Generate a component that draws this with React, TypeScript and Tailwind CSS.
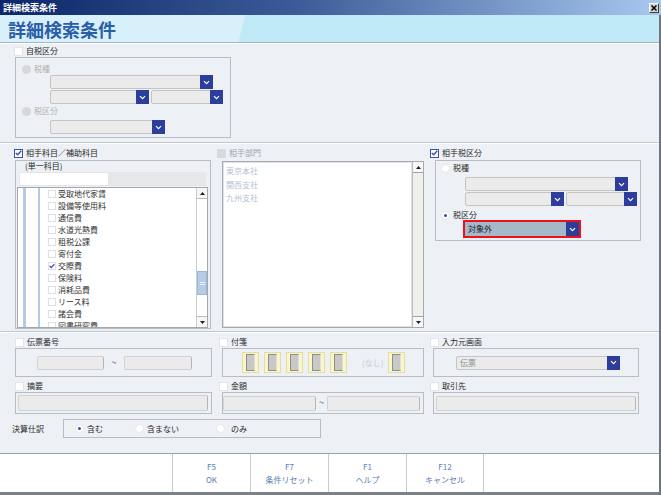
import React from 'react';

type RadioState = 'dis' | 'off' | 'on';

function Chevron() {
  return (
    <svg width="7" height="5" viewBox="0 0 7 5" fill="none">
      <path d="M1 1.2 3.5 3.7 6 1.2" stroke="#ffffff" strokeWidth="1.2" />
    </svg>
  );
}

function Arrow({ up }: { up?: boolean }) {
  return (
    <svg width="5" height="3" viewBox="0 0 5 3">
      <path d={up ? 'M0 3h5L2.5 0z' : 'M0 0h5L2.5 3z'} fill="#1e1e1e" />
    </svg>
  );
}

function Select({ w, text, textClass = '' }: { w: string; text?: string; textClass?: string }) {
  return (
    <div className={`${w} h-[14px] flex border border-[#c4c4c4] rounded-[2px] bg-[#ebebeb]`}>
      <div className={`flex-1 flex items-center pl-[3px] text-[8px] leading-[12px] ${textClass}`}>{text}</div>
      <div className="w-[13px] -my-[1px] -mr-[1px] shrink-0 bg-[#2c3d9b] flex items-center justify-center">
        <Chevron />
      </div>
    </div>
  );
}

function Input({ w, h = 'h-[14px]' }: { w: string; h?: string }) {
  return <div className={`${w} ${h} bg-[#ebebeb] border border-[#d2d2d2] border-r-[#b5b5b5] rounded-[2px]`} />;
}

function Check({ label, checked = false, disabled = false, className = '' }: { label: string; checked?: boolean; disabled?: boolean; className?: string }) {
  return (
    <div className={`flex items-center h-[10px] ${className}`}>
      <span
        className={`w-[9px] h-[9px] shrink-0 flex items-center justify-center ${
          checked ? 'bg-white border border-[#3b55a6]' : disabled ? 'bg-[#d6d9dd]' : 'bg-white border border-[#e1e4e8]'
        }`}
      >
        {checked && (
          <svg width="7" height="6" viewBox="0 0 7 6">
            <path d="M0.8 3 2.7 4.8 6.2 0.8" stroke="#2f4fa8" strokeWidth="1.4" fill="none" />
          </svg>
        )}
      </span>
      <span className={`ml-[3px] text-[8px] leading-[10px] whitespace-nowrap ${disabled ? 'text-[#9aa6b2]' : 'text-[#2a2a2a]'}`}>{label}</span>
    </div>
  );
}

function Radio({ label, state, gap = 'ml-[3px]' }: { label: string; state: RadioState; gap?: string }) {
  return (
    <div className="flex items-center h-[10px]">
      <span
        className={`w-[9px] h-[9px] rounded-full shrink-0 flex items-center justify-center ${
          state === 'dis' ? 'bg-[#d6d8db]' : 'bg-white border border-[#e6e8eb]'
        }`}
      >
        {state === 'on' && <span className="w-[3px] h-[3px] rounded-full bg-[#2f4fa8]" />}
      </span>
      <span className={`${gap} text-[8px] leading-[10px] whitespace-nowrap ${state === 'dis' ? 'text-[#b0b0b0]' : 'text-[#2a2a2a]'}`}>{label}</span>
    </div>
  );
}

function Sticky() {
  return (
    <div className="w-[17px] h-[21px] shrink-0 bg-[#fbf7c4] border border-[#e4dea4] flex items-center justify-center">
      <div className="w-[9px] h-[17px] bg-[#c8c8c8] border border-[#8e8e8e] border-r-[#dedede]" />
    </div>
  );
}

function Separator() {
  return (
    <div>
      <div className="h-[1px] bg-[#c3c8cd]" />
      <div className="h-[1px] bg-white" />
    </div>
  );
}

const accounts = ['受取地代家賃', '設備等使用料', '通信費', '水道光熱費', '租税公課', '寄付金', '交際費', '保険料', '消耗品費', 'リース料', '諸会費', '図書研究費'];
const depts = ['東京本社', '関西支社', '九州支社'];
const keys = [
  ['F5', 'OK'],
  ['F7', '条件リセット'],
  ['F1', 'ヘルプ'],
  ['F12', 'キャンセル'],
];

export default function App() {
  return (
    <div className="w-[661px] h-[495px] flex flex-col overflow-hidden bg-[#edf0f4] font-['Noto_Sans_CJK_JP','Noto_Sans',sans-serif]">
      {/* Title bar */}
      <div className="h-[15px] shrink-0 flex items-center justify-between pl-[3px] pr-[2px] bg-[linear-gradient(90deg,#0c2669_0%,#3d5b98_45%,#a8c8ee_100%)]">
        <span className="text-[9px] leading-[12px] font-bold text-white">詳細検索条件</span>
        <div className="w-[10px] h-[10px] bg-[#d8d5cf] border border-t-white border-l-white border-r-[#404040] border-b-[#404040] flex items-center justify-center">
          <svg width="6" height="6" viewBox="0 0 6 6">
            <path d="M0.5 0.5 5.5 5.5M5.5 0.5 0.5 5.5" stroke="#000" strokeWidth="1.5" />
          </svg>
        </div>
      </div>

      <div className="flex-1 flex flex-col border-r-2 border-[#6f757c]">
        {/* Header */}
        <div className="h-[27px] shrink-0 flex items-center pl-[8px] bg-[linear-gradient(105deg,#d8f0fa_0%,#d8f0fa_36.7%,#c0e9f8_37%,#c0e9f8_100%)]">
          <span className="text-[18px] leading-[22px] font-bold text-[#2a5ea8]">詳細検索条件</span>
        </div>
        <div className="h-[1px] bg-[#a2b9c5]" />
        <div className="h-[1px] bg-white" />

        {/* Main */}
        <div className="flex-1 flex flex-col">
          {/* Section 1 */}
          <div className="pl-[14px] pt-[2px]">
            <Check label="自税区分" />
            <div className="ml-[1px] mt-[1px] w-[216px] h-[81px] border border-[#b8bdc3] pl-[6px] pt-[6px]">
              <Radio label="税種" state="dis" />
              <div className="ml-[28px] mt-[1px]">
                <Select w="w-[163px]" />
                <div className="flex gap-[2px] mt-[1px]">
                  <Select w="w-[99px]" />
                  <Select w="w-[72px]" />
                </div>
              </div>
              <div className="mt-[2px]">
                <Radio label="税区分" state="dis" />
              </div>
              <div className="ml-[28px] mt-[4px]">
                <Select w="w-[115px]" />
              </div>
            </div>
          </div>
          <div className="mt-[4px]">
            <Separator />
          </div>

          {/* Section 2 */}
          <div className="flex pl-[14px] pt-[4px]">
            <div className="w-[197px] shrink-0">
              <Check label="相手科目／補助科目" checked />
              <div className="ml-[1px] mt-[2px] w-[196px] border border-[#b8bdc3]">
                <div className="h-[10px] pl-[9px] text-[8px] leading-[10px] text-[#2a2a2a]">(単一科目)</div>
                <div className="flex mt-[1px] pl-[3px]">
                  <div className="w-[90px] h-[14px] bg-white border border-[#e4e6e9]" />
                  <div className="w-[97px] h-[14px] bg-[#e5e7ea]" />
                </div>
                <div className="ml-[1px] mt-[1px] w-[191px] h-[141px] flex bg-white border border-[#a3a8ae] overflow-hidden">
                  <div className="flex-1 overflow-hidden">
                    {accounts.map((a) => (
                      <div key={a} className="h-[12px] flex items-center">
                        <div className="w-[5px] shrink-0" />
                        <div className="w-[3px] h-full shrink-0 bg-[#b3cbe5]" />
                        <div className="w-[12px] shrink-0" />
                        <div className="w-[2px] h-full shrink-0 bg-[#b3cbe5]" />
                        <div className="w-[8px] shrink-0" />
                        <span className="w-[8px] h-[8px] shrink-0 bg-white border border-[#dde1e5] flex items-center justify-center">
                          {a === '交際費' && (
                            <svg width="7" height="6" viewBox="0 0 7 6">
                              <path d="M0.8 3 2.7 4.8 6.2 0.8" stroke="#2f4fa8" strokeWidth="1.4" fill="none" />
                            </svg>
                          )}
                        </span>
                        <span className="ml-[2px] text-[8px] leading-[12px] text-[#333] whitespace-nowrap">{a}</span>
                      </div>
                    ))}
                  </div>
                  <div className="w-[11px] shrink-0 flex flex-col bg-white border-l border-[#c9ccd0]">
                    <div className="h-[11px] flex items-center justify-center border-b border-[#b8bcc0] bg-[#f6f6f6]">
                      <Arrow up />
                    </div>
                    <div className="flex-1">
                      <div className="mt-[72px] h-[24px] bg-[#b6cce6] border border-[#9fb8d8] flex flex-col items-center justify-center gap-[1px]">
                        <div className="w-[5px] h-[1px] bg-[#e8f0fa]" />
                        <div className="w-[5px] h-[1px] bg-[#e8f0fa]" />
                      </div>
                    </div>
                    <div className="h-[11px] flex items-center justify-center border-t border-[#b8bcc0] bg-[#f6f6f6]">
                      <Arrow />
                    </div>
                  </div>
                </div>
              </div>
            </div>

            <div className="w-[216px] shrink-0">
              <Check label="相手部門" disabled className="ml-[6px]" />
              <div className="ml-[11px] mt-[3px] w-[202px] h-[167px] flex bg-white border border-[#a5aab0] overflow-hidden">
                <div className="flex-1 pl-[2px] pt-[1px] border border-[#dfe2e6]">
                  {depts.map((d) => (
                    <div key={d} className="h-[13.5px] text-[8px] leading-[13.5px] text-[#b2c2d4]">
                      {d}
                    </div>
                  ))}
                </div>
                <div className="w-[11px] shrink-0 flex flex-col bg-[#f1efea] border-l border-[#b8bcc0]">
                  <div className="h-[11px] flex items-center justify-center border-b border-[#9ea2a6] bg-[#f8f8f8]">
                    <Arrow up />
                  </div>
                  <div className="flex-1" />
                  <div className="h-[11px] flex items-center justify-center border-t border-[#9ea2a6] bg-[#f8f8f8]">
                    <Arrow />
                  </div>
                </div>
              </div>
            </div>

            <div className="flex-1">
              <Check label="相手税区分" checked className="ml-[3px]" />
              <div className="ml-[8px] mt-[2px] w-[206px] h-[81px] border border-[#b8bdc3] pl-[5px] pt-[2px]">
                <Radio label="税種" state="off" />
                <div className="ml-[24px] mt-[4px]">
                  <Select w="w-[163px]" />
                  <div className="flex gap-[2px] mt-[1px]">
                    <Select w="w-[99px]" />
                    <Select w="w-[71px]" />
                  </div>
                </div>
                <div className="mt-[4px]">
                  <Radio label="税区分" state="on" />
                </div>
                <div className="ml-[22px] w-[118px] h-[18px] flex border-2 border-[#e8141c]">
                  <div className="flex-1 flex items-center pl-[3px] bg-[#a5b7c9] text-[8px] leading-[12px] text-[#222]">対象外</div>
                  <div className="w-[13px] shrink-0 bg-[#2c3d9b] flex items-center justify-center">
                    <Chevron />
                  </div>
                </div>
              </div>
            </div>
          </div>
          <div className="mt-[2px]">
            <Separator />
          </div>

          {/* Section 3 */}
          <div className="flex pl-[15px] pt-[4px]">
            <div className="w-[197px] shrink-0">
              <Check label="伝票番号" />
              <div className="mt-[1px] w-[197px] h-[29px] border border-[#b8bdc3] flex items-center pl-[21px]">
                <Input w="w-[67px]" />
                <span className="w-[20px] text-center text-[9px] leading-[12px] text-[#444]">~</span>
                <Input w="w-[68px]" />
              </div>
              <Check label="摘要" className="mt-[4px]" />
              <div className="mt-[1px] w-[197px] h-[22px] border border-[#b8bdc3] flex items-center pl-[2px]">
                <Input w="w-[190px]" h="h-[16px]" />
              </div>
            </div>

            <div className="w-[221px] shrink-0">
              <Check label="付箋" className="ml-[7px]" />
              <div className="ml-[10px] mt-[1px] w-[202px] h-[29px] border border-[#b8bdc3] flex items-center pl-[19px]">
                <div className="flex gap-[5px]">
                  <Sticky />
                  <Sticky />
                  <Sticky />
                  <Sticky />
                  <Sticky />
                </div>
                <span className="ml-[15px] text-[8px] leading-[10px] text-[#c3ccd8]">(なし)</span>
                <div className="ml-[5px]">
                  <Sticky />
                </div>
              </div>
              <Check label="金額" className="ml-[7px] mt-[4px]" />
              <div className="ml-[10px] mt-[1px] w-[202px] h-[22px] border border-[#b8bdc3] flex items-center">
                <Input w="w-[93px]" h="h-[15px]" />
                <span className="w-[11px] text-center text-[9px] leading-[12px] text-[#444]">~</span>
                <Input w="w-[93px]" h="h-[15px]" />
              </div>
            </div>

            <div className="flex-1">
              <Check label="入力元画面" className="-ml-[3px]" />
              <div className="mt-[1px] w-[206px] h-[29px] border border-[#b8bdc3] flex items-center pl-[22px]">
                <Select w="w-[164px]" text="伝票" textClass="text-[#8c8c8c]" />
              </div>
              <Check label="取引先" className="-ml-[3px] mt-[4px]" />
              <div className="mt-[1px] w-[206px] h-[22px] border border-[#b8bdc3] flex items-center pl-[2px]">
                <Input w="w-[200px]" h="h-[15px]" />
              </div>
            </div>
          </div>

          <div className="flex items-center pl-[12px] mt-[5px]">
            <span className="w-[51px] text-[8px] leading-[10px] text-[#2a2a2a]">決算仕訳</span>
            <div className="w-[258px] h-[19px] border border-[#b8bdc3] flex items-center pl-[11px]">
              <div className="w-[60px]">
                <Radio label="含む" state="on" />
              </div>
              <div className="w-[81px]">
                <Radio label="含まない" state="off" />
              </div>
              <div>
                <Radio label="のみ" state="off" gap="ml-[6px]" />
              </div>
            </div>
          </div>
        </div>

        {/* Footer */}
        <div className="h-[42px] shrink-0 flex flex-col">
          <div className="h-[1px] bg-[#9ba0a6]" />
          <div className="flex-1 flex bg-white pl-[172px]">
            {keys.map(([k, t], i) => (
              <div
                key={k}
                className={`w-[78px] flex flex-col items-center justify-center border-l border-[#c9cccf] ${i === 3 ? 'border-r' : ''}`}
              >
                <span className="text-[8px] leading-[13px] text-[#5b7db5]">{k}</span>
                <span className="text-[8px] leading-[13px] text-[#5b7db5]">{t}</span>
              </div>
            ))}
          </div>
          <div className="h-[3px] bg-[#7c8187]" />
        </div>
      </div>
    </div>
  );
}
